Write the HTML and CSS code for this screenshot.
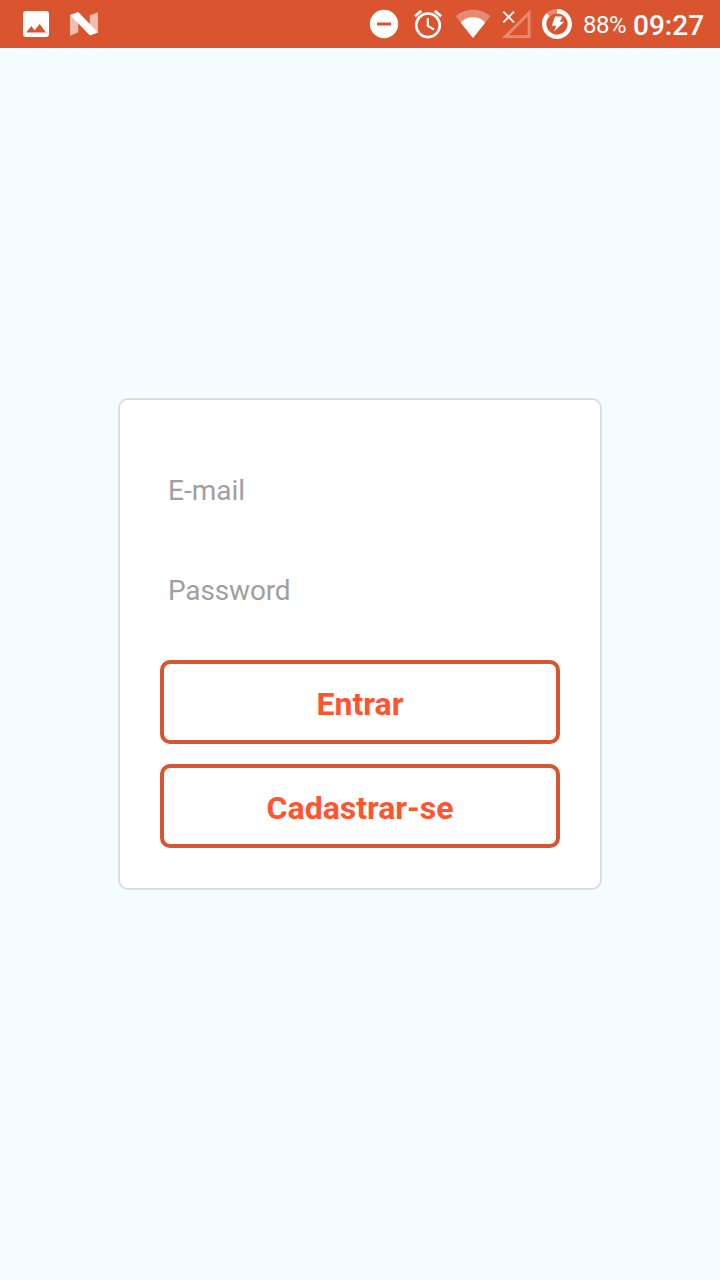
FILE: index.html
```html
<!DOCTYPE html>
<html lang="pt-BR">
<head>
<meta charset="utf-8">
<title>Entrar</title>
<link rel="stylesheet" href="styles.css">
</head>
<body>
<div class="screen">
  <header class="status">
    <div class="notifications">
      <svg class="icon" viewBox="0 0 48 48">
        <path fill="#fff" fill-rule="evenodd" d="M14 11H34Q37 11 37 14V34Q37 37 34 37H14Q11 37 11 34V14Q11 11 14 11ZM14.3 32.5H34L27.7 24L22.7 30.2L19.2 26Z"/>
      </svg>
      <svg class="icon" viewBox="0 0 48 48">
        <path fill="#fff" fill-opacity=".62" d="M10 15V35.7L18.3 32.3V21.5L10 15ZM29.7 15.3L38 12.2V32.5L29.7 26Z"/>
        <path fill="#fff" d="M10 15L18.2 12L38 32.5L30 35.6Z"/>
      </svg>
    </div>
    <div class="system">
      <svg class="icon-slot" viewBox="0 0 44 48">
        <circle cx="22" cy="24" r="14.2" fill="#fff"/>
        <path d="M15 24H29" stroke="#da5430" stroke-width="3"/>
      </svg>
      <svg class="icon-slot" viewBox="0 0 44 48" fill="none" stroke="#fff">
        <circle cx="22" cy="25.3" r="11.8" stroke-width="2.6"/>
        <path stroke-width="2.7" d="M8.9 16.2L15.3 10.9M35.1 16.2L28.7 10.9"/>
        <path stroke-width="2.1" d="M21.8 18V25.8L28 29.5"/>
      </svg>
      <svg class="icon-slot" viewBox="0 0 44 48" fill="#fff">
        <path fill-opacity=".32" d="M21 38L3.8 16.2C8.2 12 14.3 9.8 21 9.8S33.8 12 38.2 16.2Z"/>
        <path d="M21 38L8.8 22.7C12 19 16.2 17.2 21 17.2S30 19 33.2 22.7Z"/>
      </svg>
      <svg class="icon-slot" viewBox="0 0 44 48" fill="none" stroke="#fff">
        <path stroke-width="2.8" stroke-opacity=".32" d="M33.1 13V36.7H9.4Z"/>
        <path stroke-width="1.9" d="M7.3 11.7L18 22.4M18 11.7L7.3 22.4"/>
      </svg>
      <svg class="icon-slot" viewBox="0 0 44 48" fill="none" stroke="#fff">
        <path stroke-width="4.4" stroke-opacity=".32" d="M6.24 14.67A12.8 12.8 0 0 1 15 11.2"/>
        <path stroke-width="4.4" d="M15 11.2A12.8 12.8 0 1 1 6.24 14.67"/>
        <path fill="#fff" stroke="none" d="M13 16.5H20.2L18 21.8H22.2L12 31.6L14.1 25.8H9.8Z"/>
      </svg>
      <span class="battery">88%</span>
      <span class="clock">09:27</span>
    </div>
  </header>
  <main class="content">
    <form class="card">
      <input class="field" type="email" placeholder="E-mail">
      <input class="field" type="password" placeholder="Password">
      <div class="actions">
        <button class="button" type="button">Entrar</button>
        <button class="button" type="button">Cadastrar-se</button>
      </div>
    </form>
  </main>
</div>
</body>
</html>
```
FILE: styles.css
```css
* {
  box-sizing: border-box;
}

body {
  margin: 0;
  font-family: Roboto, sans-serif;
}

.screen {
  display: flex;
  flex-direction: column;
  height: 1280px;
  background: #f5fcff;
}

.status {
  display: flex;
  justify-content: space-between;
  height: 48px;
  padding-left: 12px;
  background: #da5430;
  color: #fff;
}

.notifications,
.system {
  display: flex;
}

.icon {
  width: 48px;
  height: 48px;
}

.icon-slot {
  flex: none;
  width: 44px;
  height: 48px;
}

.system {
  width: 358px;
  line-height: 50px;
  white-space: nowrap;
}

.icon-slot:nth-child(3) {
  margin-left: 2px;
}

.icon-slot:nth-child(4) {
  margin-right: 2px;
}

.battery {
  width: 50px;
  margin-left: -3px;
  font-size: 24px;
  letter-spacing: -0.5px;
}

.clock {
  font-size: 28px;
  font-weight: 500;
  line-height: 52px;
}

.content {
  display: flex;
  flex: 1;
  align-items: center;
  justify-content: center;
  padding-bottom: 40px;
}

.card {
  display: flex;
  flex-direction: column;
  width: 484px;
  padding: 40px;
  border: 2px solid #ddd;
  border-radius: 10px;
  background: #fff;
}

.field {
  height: 100px;
  padding: 0 8px;
  border: 0;
  outline: 0;
  background: transparent;
  font: 28px Roboto, sans-serif;
}

.field[type="password"] {
  letter-spacing: -0.15px;
}

.field::placeholder {
  color: #a0a0a0;
  opacity: 1;
}

.actions {
  display: grid;
  gap: 20px;
  margin-top: 20px;
}

.button {
  height: 84px;
  padding: 4px 0 0;
  border: 4px solid #da552f;
  border-radius: 10px;
  background: #fff;
  color: #ff552f;
  font: bold 32px Roboto, sans-serif;
}
```
